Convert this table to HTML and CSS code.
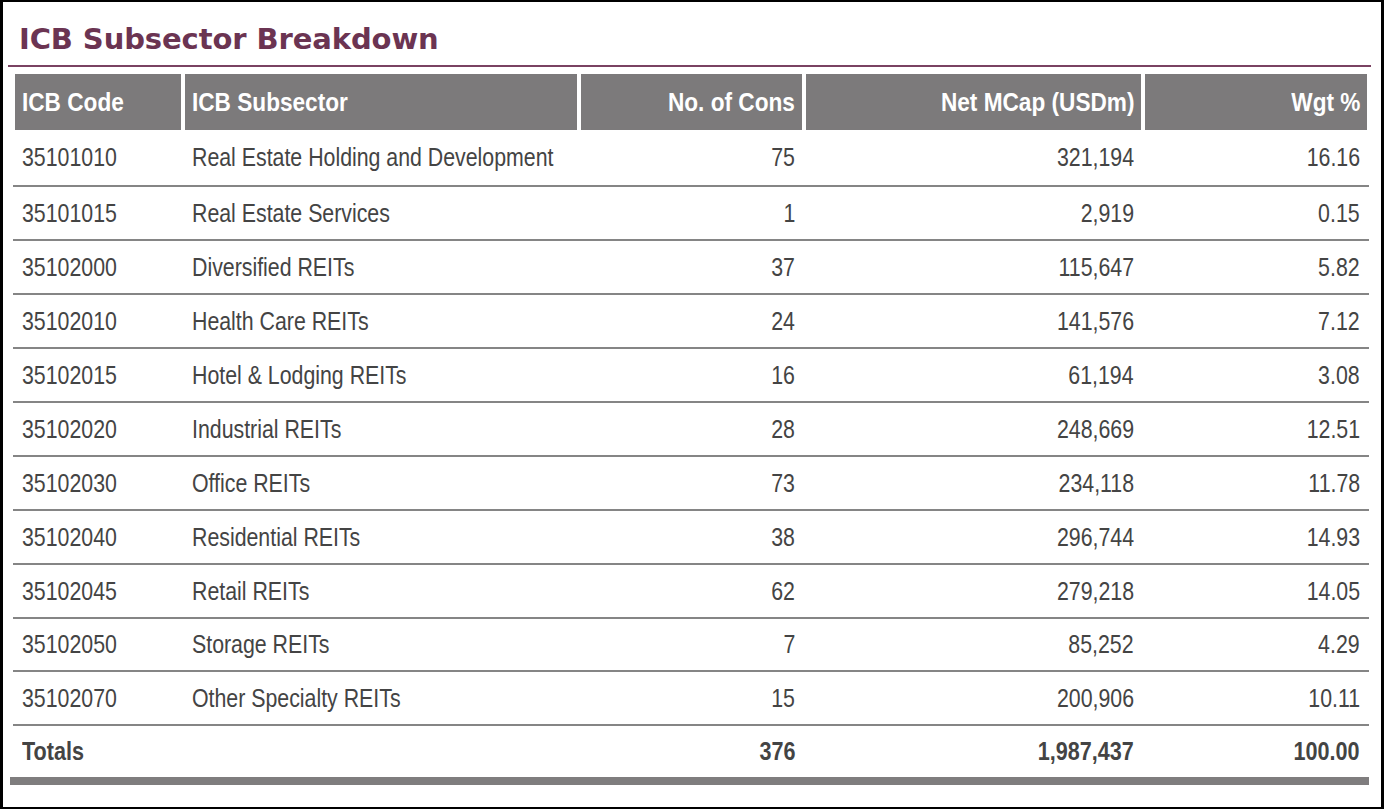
FILE: index.html
```html
<!DOCTYPE html>
<html lang="en">
<head>
<meta charset="utf-8">
<title>ICB Subsector Breakdown</title>
<link rel="stylesheet" href="styles.css">
</head>
<body>
<div class="frame">
  <h1 class="title">ICB Subsector Breakdown</h1>
  <div class="rule"></div>
  <div class="table">
    <div class="grid thead">
      <div class="c"><span class="t">ICB Code</span></div>
      <div class="c"><span class="t">ICB Subsector</span></div>
      <div class="c r"><span class="t">No. of Cons</span></div>
      <div class="c r"><span class="t">Net MCap (USDm)</span></div>
      <div class="c r"><span class="t">Wgt %</span></div>
    </div>
    <div class="grid row first">
      <div class="c"><span class="t">35101010</span></div><div class="c"><span class="t">Real Estate Holding and Development</span></div><div class="c r"><span class="t">75</span></div><div class="c r"><span class="t">321,194</span></div><div class="c r"><span class="t">16.16</span></div>
    </div>
    <div class="grid row">
      <div class="c"><span class="t">35101015</span></div><div class="c"><span class="t">Real Estate Services</span></div><div class="c r"><span class="t">1</span></div><div class="c r"><span class="t">2,919</span></div><div class="c r"><span class="t">0.15</span></div>
    </div>
    <div class="grid row">
      <div class="c"><span class="t">35102000</span></div><div class="c"><span class="t">Diversified REITs</span></div><div class="c r"><span class="t">37</span></div><div class="c r"><span class="t">115,647</span></div><div class="c r"><span class="t">5.82</span></div>
    </div>
    <div class="grid row">
      <div class="c"><span class="t">35102010</span></div><div class="c"><span class="t">Health Care REITs</span></div><div class="c r"><span class="t">24</span></div><div class="c r"><span class="t">141,576</span></div><div class="c r"><span class="t">7.12</span></div>
    </div>
    <div class="grid row">
      <div class="c"><span class="t">35102015</span></div><div class="c"><span class="t">Hotel &amp; Lodging REITs</span></div><div class="c r"><span class="t">16</span></div><div class="c r"><span class="t">61,194</span></div><div class="c r"><span class="t">3.08</span></div>
    </div>
    <div class="grid row">
      <div class="c"><span class="t">35102020</span></div><div class="c"><span class="t">Industrial REITs</span></div><div class="c r"><span class="t">28</span></div><div class="c r"><span class="t">248,669</span></div><div class="c r"><span class="t">12.51</span></div>
    </div>
    <div class="grid row">
      <div class="c"><span class="t">35102030</span></div><div class="c"><span class="t">Office REITs</span></div><div class="c r"><span class="t">73</span></div><div class="c r"><span class="t">234,118</span></div><div class="c r"><span class="t">11.78</span></div>
    </div>
    <div class="grid row">
      <div class="c"><span class="t">35102040</span></div><div class="c"><span class="t">Residential REITs</span></div><div class="c r"><span class="t">38</span></div><div class="c r"><span class="t">296,744</span></div><div class="c r"><span class="t">14.93</span></div>
    </div>
    <div class="grid row">
      <div class="c"><span class="t">35102045</span></div><div class="c"><span class="t">Retail REITs</span></div><div class="c r"><span class="t">62</span></div><div class="c r"><span class="t">279,218</span></div><div class="c r"><span class="t">14.05</span></div>
    </div>
    <div class="grid row short">
      <div class="c"><span class="t">35102050</span></div><div class="c"><span class="t">Storage REITs</span></div><div class="c r"><span class="t">7</span></div><div class="c r"><span class="t">85,252</span></div><div class="c r"><span class="t">4.29</span></div>
    </div>
    <div class="grid row">
      <div class="c"><span class="t">35102070</span></div><div class="c"><span class="t">Other Specialty REITs</span></div><div class="c r"><span class="t">15</span></div><div class="c r"><span class="t">200,906</span></div><div class="c r"><span class="t">10.11</span></div>
    </div>
    <div class="grid row totals">
      <div class="c"><span class="t">Totals</span></div><div class="c"></div><div class="c r"><span class="t">376</span></div><div class="c r"><span class="t">1,987,437</span></div><div class="c r"><span class="t">100.00</span></div>
    </div>
    <div class="endbar"></div>
  </div>
</div>
</body>
</html>
```
FILE: styles.css
```css
html, body {
  margin: 0;
  padding: 0;
  background: #ffffff;
}

.frame {
  box-sizing: border-box;
  width: 1384px;
  height: 809px;
  border-style: solid;
  border-color: #000000;
  border-width: 2px 3px 2px 3px;
  background: #ffffff;
  overflow: hidden;
}

.title {
  margin: 20px 0 0 0;
  padding-left: 16px;
  height: 34px;
  font-family: "DejaVu Sans", Verdana, sans-serif;
  font-weight: bold;
  font-size: 29px;
  line-height: 34px;
  letter-spacing: -0.1px;
  color: #6b3452;
}

.rule {
  height: 2px;
  margin: 9px 10px 0 5px;
  background: #7a4262;
}

.table {
  margin: 7px 12px 0 10px;
  font-family: "Liberation Sans", Arial, sans-serif;
  font-size: 26px;
  color: #444444;
}

.grid {
  display: grid;
  grid-template-columns: 166px 392px 221px 335px 222px;
  column-gap: 4px;
  padding: 0 2px;
}

.c {
  display: flex;
  align-items: center;
  padding: 0 7px;
  white-space: nowrap;
  overflow: visible;
}

.c.r {
  justify-content: flex-end;
  padding-right: 7px;
}

.t {
  display: inline-block;
  transform: scaleX(0.82);
  transform-origin: left center;
}

.c.r .t {
  transform-origin: right center;
}

.thead {
  height: 56px;
}

.thead .c {
  background: #7c7a7b;
  color: #ffffff;
  font-weight: bold;
}

.thead .t {
  transform: scaleX(0.87);
}

.row {
  height: 52px;
  border-bottom: 2px solid #858585;
}

.row.first {
  height: 55px;
}

.row.short {
  height: 51px;
}

.row.totals {
  height: 51px;
  border-bottom: none;
  font-weight: bold;
}

.row.totals .t {
  transform: scaleX(0.83);
}

.endbar {
  height: 8px;
  margin-left: -3px;
  background: #7f7d7e;
}
```
